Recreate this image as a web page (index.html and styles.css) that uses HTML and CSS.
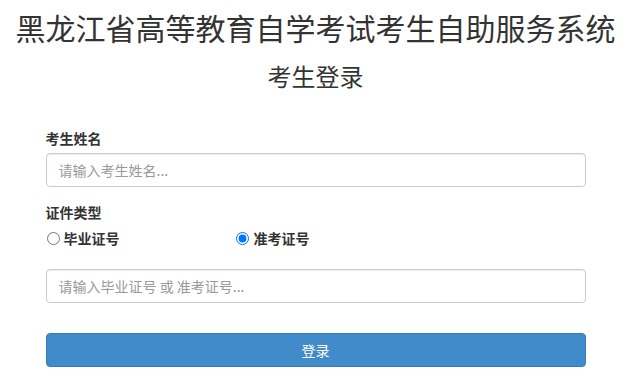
FILE: index.html
```html
<!DOCTYPE html>
<html lang="zh-CN">
  <head>
    <meta charset="UTF-8" />
    <meta name="viewport" content="width=device-width, initial-scale=1.0" />
    <title>考生登录 - 黑龙江省高等教育自学考试考生自助服务系统</title>
    <link rel="stylesheet" href="styles.css">
  </head>
  <body>
    <div class="container">
      <h1>黑龙江省高等教育自学考试考生自助服务系统</h1>
      <h2>考生登录</h2>

      <form class="login-form" onsubmit="return false">
        <div class="form-group">
          <label class="control-label" for="name">考生姓名</label>
          <input id="name" class="form-control" type="text" placeholder="请输入考生姓名..." />
        </div>

        <div class="form-group">
          <label class="control-label">证件类型</label>
          <div class="row">
            <label class="radio col-4">
              <input type="radio" name="idType" value="byzh" />毕业证号
            </label>
            <label class="radio col-4">
              <input type="radio" name="idType" value="zkzh" checked />准考证号
            </label>
          </div>
        </div>

        <div class="form-group">
          <input class="form-control" type="text" placeholder="请输入毕业证号 或 准考证号..." />
        </div>

        <button class="btn btn-primary" type="submit">登录</button>
      </form>
    </div>
  </body>
</html>
```

FILE: styles.css
```css
* {
  margin: 0;
  padding: 0;
  box-sizing: border-box;
}

body {
  font-family: "Noto Sans CJK SC", "Noto Sans", sans-serif;
  font-size: 14px;
  color: #333;
  background: #fff;
  padding-right: 10px;
}

.container {
  width: 570px;
  margin: 0 auto;
  padding: 0 15px;
}

h1 {
  margin: 10px -30px 0;
  font-size: 30px;
  line-height: 34px;
  font-weight: 400;
  text-align: center;
  white-space: nowrap;
}

h2 {
  margin-top: 18px;
  font-size: 24px;
  line-height: 28px;
  font-weight: 400;
  text-align: center;
}

.login-form {
  margin-top: 38px;
}

.form-group {
  margin-bottom: 15px;
}

.form-group:nth-child(2) {
  margin-bottom: 21px;
}

.form-group:nth-child(3) {
  margin-bottom: 30px;
}

.control-label {
  display: block;
  font-weight: 700;
  line-height: 20px;
  margin-bottom: 5px;
}

.form-control {
  display: block;
  width: 100%;
  height: 34px;
  padding: 6px 12px;
  font: inherit;
  color: #555;
  border: 1px solid #ccc;
  border-radius: 4px;
  box-shadow: inset 0 1px 1px rgba(0, 0, 0, 0.075);
  outline: none;
}

.form-control::placeholder {
  color: #999;
}

.row {
  display: flex;
  margin: 6px -15px 0;
}

.col-4 {
  width: 33.3333%;
  padding: 0 15px;
}

.radio {
  display: flex;
  align-items: center;
  font-weight: 700;
  line-height: 20px;
  cursor: pointer;
}

.radio input {
  width: 13px;
  height: 13px;
  margin: 0 4px 0 1px;
}

.btn {
  display: block;
  width: 100%;
  height: 34px;
  font: inherit;
  border-radius: 4px;
  cursor: pointer;
}

.btn-primary {
  background: #428bca;
  border: 1px solid #357ebd;
  color: #fff;
}

.btn-primary:hover {
  background: #3071a9;
}
```
